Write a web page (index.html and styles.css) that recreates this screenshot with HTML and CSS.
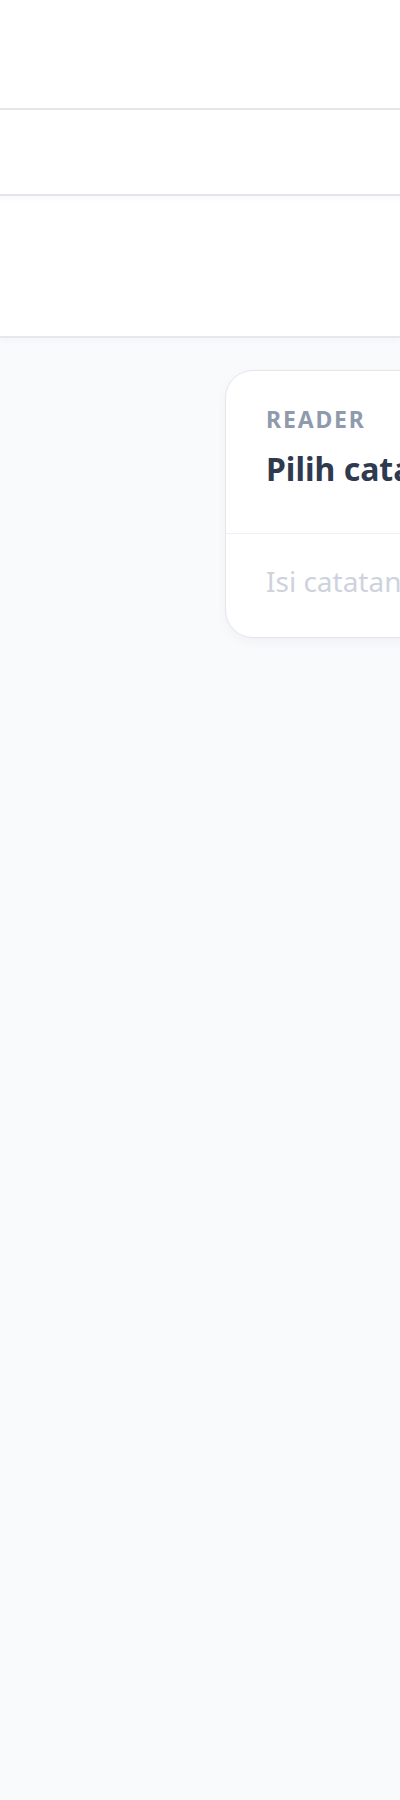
FILE: index.html
```html
<!DOCTYPE html>
<html lang="id">
<head>
<meta charset="utf-8">
<title>Reader</title>
<link rel="stylesheet" href="styles.css">
</head>
<body>
<div class="app">
  <header class="topbar"></header>
  <div class="toolbar"></div>
  <div class="panel"></div>
  <main class="main">
    <aside class="list"></aside>
    <section class="reader">
      <div class="reader-head">
        <div class="label">READER</div>
        <h1 class="title">Pilih catatan</h1>
      </div>
      <div class="reader-body">
        <p class="placeholder">Isi catatan akan tampil di sini.</p>
      </div>
    </section>
  </main>
</div>
</body>
</html>
```

FILE: styles.css
```css
* { box-sizing: border-box; }
html, body {
  margin: 0;
  padding: 0;
  background: #f8fafc;
  font-family: "Noto Sans", "Open Sans", sans-serif;
  overflow-x: hidden;
}
.app {
  min-height: 1800px;
  display: flex;
  flex-direction: column;
}
.topbar {
  height: 110px;
  background: #ffffff;
  border-bottom: 2px solid #e6e7ea;
}
.toolbar {
  height: 86px;
  background: #ffffff;
  border-bottom: 2px solid #e4e5ea;
  box-shadow: 0 2px 6px rgba(90, 100, 140, 0.05);
  position: relative;
  z-index: 1;
}
.panel {
  height: 142px;
  background: #ffffff;
  border-bottom: 2px solid #e6e7ea;
  box-shadow: 0 3px 6px rgba(90, 100, 140, 0.03);
}
.main {
  flex: 1;
  display: grid;
  grid-template-columns: 193px 460px;
  column-gap: 32px;
  padding-top: 32px;
  align-items: start;
}
.reader {
  background: #ffffff;
  border: 1px solid #e3e6eb;
  border-radius: 28px;
  box-shadow: 0 4px 12px rgba(15, 23, 42, 0.04);
}
.reader-head {
  padding: 32px 40px 44px;
  border-bottom: 1px solid #eef1f5;
}
.label {
  font-size: 23px;
  line-height: 32px;
  font-weight: 700;
  letter-spacing: 0.08em;
  color: #8f9aad;
}
.title {
  margin: 14px 0 0;
  font-size: 32px;
  line-height: 40px;
  font-weight: 700;
  color: #2f3a4f;
  white-space: nowrap;
}
.reader-body {
  padding: 28px 40px 37px;
}
.placeholder {
  margin: 0;
  font-size: 28px;
  line-height: 38px;
  color: #cdd3de;
  white-space: nowrap;
}
```
